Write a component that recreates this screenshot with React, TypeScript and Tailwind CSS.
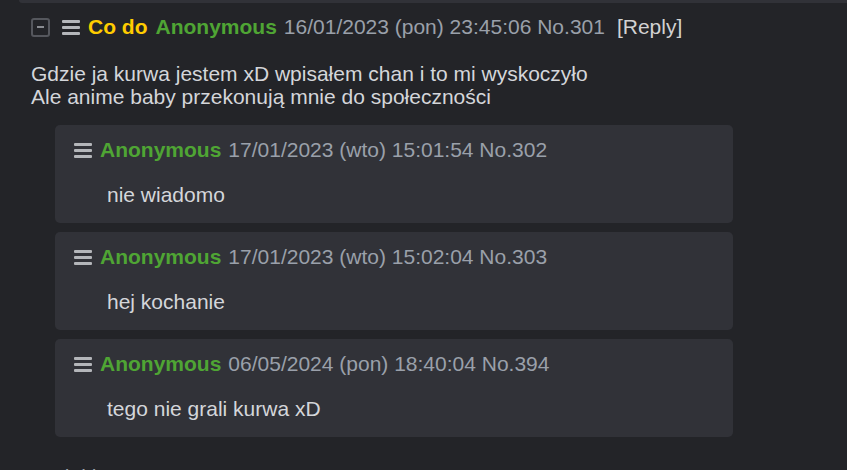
const REPLIES = [
  { name: 'Anonymous', date: '17/01/2023 (wto) 15:01:54', no: '302', text: 'nie wiadomo' },
  { name: 'Anonymous', date: '17/01/2023 (wto) 15:02:04', no: '303', text: 'hej kochanie' },
  { name: 'Anonymous', date: '06/05/2024 (pon) 18:40:04', no: '394', text: 'tego nie grali kurwa xD' },
];

function Bars() {
  return (
    <svg width="18" height="15" viewBox="0 0 18 15" className="shrink-0">
      <rect x="0" y="0" width="18" height="3" rx="1" fill="#b4b6ba" />
      <rect x="0" y="6" width="18" height="3" rx="1" fill="#b4b6ba" />
      <rect x="0" y="12" width="18" height="3" rx="1" fill="#b4b6ba" />
    </svg>
  );
}

function Collapse() {
  return (
    <span className="flex h-[19px] w-[19px] shrink-0 items-center justify-center rounded-[3px] border-2 border-[#55575d]">
      <span className="h-[2px] w-[7px] bg-[#8a8c91]" />
    </span>
  );
}

export default function App() {
  return (
    <div className="h-[470px] w-[847px] overflow-hidden bg-[#232428] font-['Liberation_Sans',Arial,sans-serif] text-[21px] text-[#d4d6da]">
      <div className="ml-[19px] h-[3px] rounded-bl-[3px] bg-[#313238]" />

      <div className="pl-[31px]">
        <div className="mt-[12px] flex h-[24px] items-center leading-[24px]">
          <Collapse />
          <span className="ml-[12px]">
            <Bars />
          </span>
          <span className="ml-[8px] font-bold text-[#ffcc00]">Co do</span>
          <span className="ml-[8px] font-bold text-[#4fa534]">Anonymous</span>
          <span className="ml-[7px] text-[#9aa0aa]">16/01/2023 (pon) 23:45:06 No.301</span>
          <span className="ml-[12px] text-[#d2d2d2]">[Reply]</span>
        </div>

        <div className="mt-[23px] leading-[23px]">
          <p>Gdzie ja kurwa jestem xD wpisałem chan i to mi wyskoczyło</p>
          <p>Ale anime baby przekonują mnie do społeczności</p>
        </div>

        <div className="ml-[24px] mt-[17px] flex w-[678px] flex-col gap-[9px]">
          {REPLIES.map((r) => (
            <div key={r.no} className="rounded-[5px] bg-[#313238] pb-[16px] pl-[19px] pt-[13px]">
              <div className="flex h-[24px] items-center leading-[24px]">
                <Bars />
                <span className="ml-[8px] font-bold text-[#4fa534]">{r.name}</span>
                <span className="ml-[7px] text-[#9aa0aa]">
                  {r.date} No.{r.no}
                </span>
              </div>
              <p className="ml-[33px] mt-[21px] leading-[24px]">{r.text}</p>
            </div>
          ))}
        </div>

        <p className="mt-[28px] leading-[24px] text-[#9aa0aa]">Dodaj komentarz</p>
      </div>
    </div>
  );
}
